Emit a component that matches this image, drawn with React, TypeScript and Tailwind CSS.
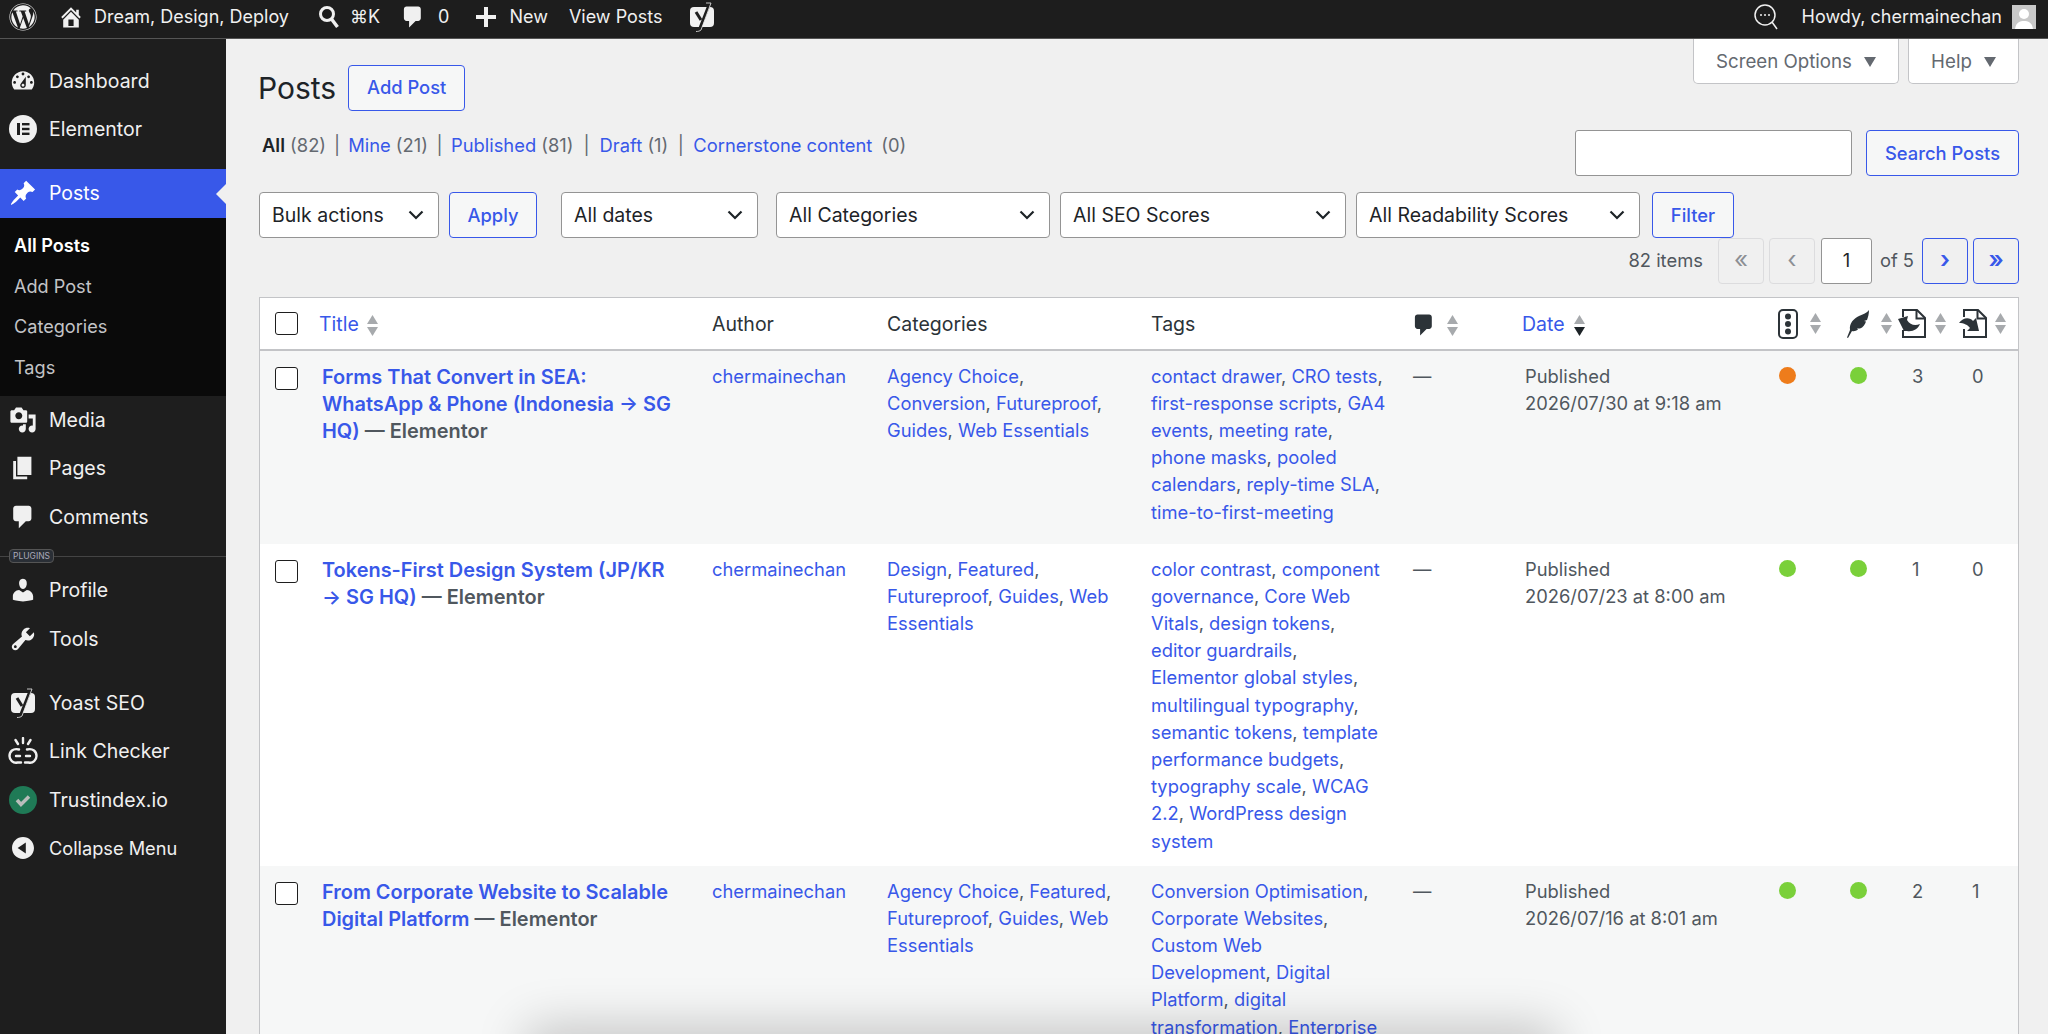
import React from "react";
import { FaWordpress } from "react-icons/fa";

const P = {
  home: "M16 8.5l1.53 1.53-1.06 1.06L10 4.62l-6.47 6.47-1.06-1.06L10 2.5l4 4v-2h2v4zm-6-2.46l6 5.99V18H4v-5.97zM12 17v-5H8v5h4z",
  comment: "M5 2h9c1.1 0 2 .9 2 2v7c0 1.1-.9 2-2 2h-2l-5 5v-5H5c-1.1 0-2-.9-2-2V4c0-1.1.9-2 2-2z",
  pin: "M10.44 3.02l1.82-1.82 6.36 6.35-1.83 1.82c-1.05-.68-2.48-.57-3.41.36l-.75.75c-.92.93-1.04 2.35-.35 3.41l-1.83 1.82-2.41-2.41-2.8 2.79c-.42.42-3.38 2.71-3.8 2.29s1.86-3.39 2.28-3.81l2.79-2.79L4.1 9.36l1.83-1.82c1.05.69 2.48.57 3.4-.36l.75-.75c.93-.92 1.05-2.35.36-3.41z",
  dash: "M3.76 16h12.48c1.1-1.37 1.76-3.11 1.76-5 0-4.42-3.58-8-8-8s-8 3.58-8 8c0 1.89.66 3.63 1.76 5zM10 4c.55 0 1 .45 1 1s-.45 1-1 1-1-.45-1-1 .45-1 1-1zM6 6c.55 0 1 .45 1 1s-.45 1-1 1-1-.45-1-1 .45-1 1-1zm8 0c.55 0 1 .45 1 1s-.45 1-1 1-1-.45-1-1 .45-1 1-1zm-5.37 5.55L12 7v6c0 1.1-.9 2-2 2s-2-.9-2-2c0-.57.24-1.08.63-1.45zM4 10c.55 0 1 .45 1 1s-.45 1-1 1-1-.45-1-1 .45-1 1-1zm12 0c.55 0 1 .45 1 1s-.45 1-1 1-1-.45-1-1 .45-1 1-1zm-5 3c0-.55-.45-1-1-1s-1 .45-1 1 .45 1 1 1 1-.45 1-1z",
  media: "M13 11V4c0-.55-.45-1-1-1h-1.67L9 1H5L3.67 3H2c-.55 0-1 .45-1 1v7c0 .55.45 1 1 1h10c.55 0 1-.45 1-1zM7 4.5c1.38 0 2.5 1.12 2.5 2.5S8.38 9.5 7 9.5 4.5 8.38 4.5 7 5.62 4.5 7 4.5zM14 6h5v10.5c0 1.38-1.12 2.5-2.5 2.5S14 17.88 14 16.5s1.12-2.5 2.5-2.5c.17 0 .34.02.5.05V9h-3V6zm-4 8.05V13h2v3.5c0 1.38-1.12 2.5-2.5 2.5S7 17.88 7 16.5 8.12 14 9.5 14c.17 0 .34.02.5.05z",
  page: "M6 15V2h10v13H6zm-1 1h8v2H3V5h2v11z",
  user: "M10 9.25c-2.27 0-2.73-3.44-2.73-3.44C7 4.02 7.82 2 9.97 2c2.16 0 2.98 2.02 2.71 3.81 0 0-.41 3.44-2.68 3.44zm0 2.57L12.72 10c2.39 0 4.52 2.33 4.52 4.53v2.49s-3.65 1.13-7.24 1.13c-3.65 0-7.24-1.13-7.24-1.13v-2.49c0-2.25 1.94-4.48 4.47-4.48z",
  tools: "M16.68 9.77c-1.34 1.34-3.3 1.67-4.95.99l-5.41 6.52c-.99.99-2.59.99-3.58 0s-.99-2.59 0-3.57l6.52-5.42c-.68-1.65-.35-3.61.99-4.95 1.28-1.28 3.12-1.62 4.72-1.06l-2.89 2.89 2.82 2.82 2.86-2.87c.53 1.58.18 3.39-1.08 4.65zM3.81 16.21c.4.39 1.04.39 1.43 0 .4-.4.4-1.04 0-1.43-.39-.4-1.03-.4-1.43 0-.39.39-.39 1.03 0 1.43z",
  collapse: "M10 2.16c4.33 0 7.84 3.51 7.84 7.84s-3.51 7.84-7.84 7.84S2.16 14.33 2.16 10 5.71 2.16 10 2.16zm2 11.72V6.12L6.18 9.97z",
};

function Dash({ d, size = 28, className = "" }: { d: string; size?: number; className?: string }) {
  return (
    <svg viewBox="0 0 20 20" width={size} height={size} fill="currentColor" className={className}>
      <path d={d} />
    </svg>
  );
}

function Elementor() {
  return (
    <svg viewBox="0 0 28 28" width={28} height={28}>
      <circle cx="14" cy="14" r="14" fill="#f0f0f0" />
      <rect x="8" y="8" width="3" height="12" fill="#1e1e1e" />
      <rect x="13" y="8" width="7.500" height="2.400" fill="#1e1e1e" />
      <rect x="13" y="12.800" width="7.500" height="2.400" fill="#1e1e1e" />
      <rect x="13" y="17.600" width="7.500" height="2.400" fill="#1e1e1e" />
    </svg>
  );
}

function Yoast({ bg = "#1e1e1e" }: { bg?: string }) {
  return (
    <svg viewBox="0 0 26 30" width={26} height={30}>
      <rect x="1" y="5" width="24" height="20" rx="4" fill="#f0f0f0" />
      <path d="M7 10l5 8" fill="none" stroke={bg} strokeWidth="3" />
      <path d="M20 3L11 26c-1 1.500-3 2-5 2" fill="none" stroke={bg} strokeWidth="3" />
      <path d="M17 1h5L12 28c-1 1-3 1.500-5 1.500" fill="none" stroke="#f0f0f0" strokeWidth="0.800" />
    </svg>
  );
}

function LinkChecker() {
  return (
    <svg viewBox="0 0 30 28" width={30} height={28} fill="none" stroke="#f0f0f0" strokeWidth="2.400" strokeLinecap="round">
      <path d="M15 1v5M7.500 3l2.500 4M22.500 3L20 7" />
      <path d="M11 12.500C5 11 1.500 14.500 1.500 19c0 4 3.500 7.500 8 6.500H13" />
      <path d="M19 12.500c6-1.500 9.500 2 9.500 6.500 0 4-3.500 7.500-8 6.500H17" />
      <path d="M8 19h4M18 19h4" />
    </svg>
  );
}

function Trust() {
  return (
    <svg viewBox="0 0 28 28" width={28} height={28}>
      <circle cx="14" cy="14" r="14" fill="#1f7a56" />
      <path d="M8 14l4 4.500 8-8" fill="none" stroke="#b9bdbb" strokeWidth="3.500" />
    </svg>
  );
}

function ChatSearch() {
  return (
    <svg viewBox="0 0 24 26" width={24} height={26} fill="none" stroke="#f0f0f0" strokeWidth="1.500">
      <circle cx="11" cy="11" r="10" />
      <path d="M18 18l5 7" />
      <circle cx="7" cy="11" r="1" fill="#f0f0f0" stroke="none" />
      <circle cx="11" cy="11" r="1" fill="#f0f0f0" stroke="none" />
      <circle cx="15" cy="11" r="1" fill="#f0f0f0" stroke="none" />
    </svg>
  );
}

function Sort({ active = false }: { active?: boolean }) {
  return (
    <span className="inline-flex flex-col gap-[3px] w-[11px] shrink-0">
      <svg viewBox="0 0 11 9" width={11} height={9}><path d="M5.500 0L11 9H0z" fill="#a7aaad" /></svg>
      <svg viewBox="0 0 11 9" width={11} height={9}><path d="M5.500 9L11 0H0z" fill={active ? "#1d2327" : "#a7aaad"} /></svg>
    </span>
  );
}

function Traffic() {
  return (
    <svg viewBox="0 0 20 30" width={20} height={30}>
      <rect x="1" y="1" width="18" height="28" rx="4" fill="none" stroke="#2c3338" strokeWidth="2" />
      <circle cx="10" cy="7.500" r="3" fill="#2c3338" />
      <circle cx="10" cy="15" r="3" fill="#2c3338" />
      <circle cx="10" cy="22.500" r="3" fill="#2c3338" />
    </svg>
  );
}

function Feather() {
  return (
    <svg viewBox="0 0 22 28" width={22} height={28}>
      <path d="M22 0c0 4-1 7-2 10l-3 1 2 .500c-1 3-3 6-6 7l-3 0 1 1c-2 1.500-4 2-6 1.500L1 28 0 27.500l3-7.500C2 13 7 8.500 12 6c4-2 8-3 10-6z" fill="#2c3338" />
    </svg>
  );
}

function DocIcon({ out = false }: { out?: boolean }) {
  return (
    <svg viewBox="0 0 28 29" width={28} height={29}>
      <path d={out ? "M5 8V1h14l8 8v19H5v-8" : "M5 8V1h14l8 8v19H5v-7"} fill="none" stroke="#2c3338" strokeWidth="2" />
      <path d="M18.500 1v8.500H27" fill="none" stroke="#2c3338" strokeWidth="2" />
      {out ? (
        <path d="M0 14c4-6 11-6 14-2l3-3 3 13H8l3-3c-2-3-6-5-11-5z" fill="#2c3338" />
      ) : (
        <path d="M0 10l10-3-1 4c3 5 8 6 13 4-2 5-7 8-13 7l-3 0z" fill="#2c3338" />
      )}
    </svg>
  );
}

function Caret() {
  return <svg viewBox="0 0 12 10" width={12} height={10}><path d="M6 10L12 0H0z" fill="#646970" /></svg>;
}

function Chevron() {
  return (
    <svg viewBox="0 0 16 10" width={16} height={10} fill="none" stroke="#1d2327" strokeWidth="2.200">
      <path d="M1.500 1.500L8 8l6.500-6.500" />
    </svg>
  );
}

function Btn({ children, className = "" }: { children: React.ReactNode; className?: string }) {
  return (
    <button className={`h-[46px] pt-[1px] border-[1.500px] border-[#3858e9] rounded-[4px] text-[#3858e9] font-medium flex items-center justify-center bg-[#f6f7f7] ${className}`}>
      {children}
    </button>
  );
}

function Select({ label, className = "" }: { label: string; className?: string }) {
  return (
    <div className={`h-[46px] bg-white border-[1.500px] border-[#949494] rounded-[4px] pl-[12px] pr-[14px] flex items-center justify-between text-[19.500px] text-[#1d2327] ${className}`}>
      <span className="pt-[1px]">{label}</span>
      <Chevron />
    </div>
  );
}

function MenuItem({ icon, label, active = false, small = false }: { icon: React.ReactNode; label: string; active?: boolean; small?: boolean }) {
  return (
    <div className={`relative h-[48.500px] flex items-center text-[#f0f0f0] ${small ? "text-[18.200px]" : "text-[19.500px]"} ${active ? "bg-[#3858e9] text-white" : ""}`}>
      <span className="w-[49px] flex justify-center pr-[3px] shrink-0">{icon}</span>
      <span className="pt-[1px]">{label}</span>
      {active && (
        <span className="absolute right-0 top-[15px] w-0 h-0 border-y-[10px] border-y-transparent border-r-[10px] border-r-[#f0f0f0]" />
      )}
    </div>
  );
}

function Sidebar() {
  const sub = ["All Posts", "Add Post", "Categories", "Tags"];
  return (
    <aside className="w-[226px] shrink-0 bg-[#1e1e1e] pt-[17.500px]">
      <MenuItem icon={<Dash d={P.dash} size={28} />} label="Dashboard" />
      <MenuItem icon={<Elementor />} label="Elementor" />
      <div className="h-[15.500px]" />
      <MenuItem icon={<Dash d={P.pin} size={28} />} label="Posts" active />
      <div className="bg-[#0a0a0a] h-[178px] flex flex-col justify-center text-[18.130px]">
        {sub.map((s, i) => (
          <div key={s} className={`h-[40.500px] flex items-center pl-[14px] ${i === 0 ? "text-white font-semibold" : "text-[#c3c4c7]"}`}>{s}</div>
        ))}
      </div>
      <MenuItem icon={<Dash d={P.media} size={28} />} label="Media" />
      <MenuItem icon={<Dash d={P.page} size={28} />} label="Pages" />
      <MenuItem icon={<Dash d={P.comment} size={28} />} label="Comments" />
      <div className="relative h-[25px]">
        <div className="absolute left-0 right-0 top-[15px] h-px bg-[#444]" />
        <span className="absolute left-[9px] top-[8px] h-[14px] px-[3px] rounded-[4px] border border-[#555] bg-[#2a2f36] text-[8.500px] leading-[12px] text-[#aab]">PLUGINS</span>
      </div>
      <MenuItem icon={<Dash d={P.user} size={28} />} label="Profile" />
      <MenuItem icon={<Dash d={P.tools} size={28} />} label="Tools" />
      <div className="h-[15.500px]" />
      <MenuItem icon={<Yoast />} label="Yoast SEO" />
      <MenuItem icon={<LinkChecker />} label="Link Checker" />
      <MenuItem icon={<Trust />} label="Trustindex.io" />
      <MenuItem icon={<Dash d={P.collapse} size={28} />} label="Collapse Menu" small />
    </aside>
  );
}

function AdminBar() {
  return (
    <header className="h-[39px] shrink-0 bg-[#1d1d1d] border-b border-[#555] flex items-center text-[#f0f0f0] text-[18px] pl-[9px] pr-[12px] pb-[5px]">
      <FaWordpress size={28} />
      <Dash d={P.home} size={26} className="ml-[21px]" />
      <span className="ml-[10px]">Dream, Design, Deploy</span>
      <svg viewBox="0 0 22 24" width={22} height={24} className="ml-[29px]" fill="none" stroke="#f0f0f0">
        <circle cx="9" cy="9" r="6.500" strokeWidth="3" />
        <path d="M13.500 14l6 8" strokeWidth="3.500" />
      </svg>
      <span className="ml-[10px]">⌘K</span>
      <Dash d={P.comment} size={26} className="ml-[20px]" />
      <span className="ml-[12px]">0</span>
      <svg viewBox="0 0 20 20" width={20} height={20} fill="#f0f0f0" className="ml-[27px]"><path d="M8 0h4v8h8v4h-8v8H8v-8H0V8h8z" /></svg>
      <span className="ml-[13px]">New</span>
      <span className="ml-[21px]">View Posts</span>
      <span className="ml-[26px]"><Yoast bg="#1d1d1d" /></span>
      <span className="ml-auto"><ChatSearch /></span>
      <span className="ml-[24px]">Howdy, chermainechan</span>
      <span className="ml-[10px] w-[24px] h-[24px] bg-[#c8c8c8] flex items-end justify-center overflow-hidden">
        <svg viewBox="0 0 24 24" width={24} height={24}><circle cx="12" cy="9" r="5" fill="#fff" /><path d="M3 24c1-7 5-8 9-8s8 1 9 8z" fill="#fff" /></svg>
      </span>
    </header>
  );
}

const L = "text-[#3858e9]";

function Lines({ lines }: { lines: string[] }) {
  return (
    <>
      {lines.map((line) => (
        <div key={line} className="whitespace-nowrap">
          {line.split(/(, )|(,$)/).filter(Boolean).map((part, i) =>
            part.startsWith(",") ? <span key={i}>{part}</span> : <a key={i} className={L}>{part}</a>
          )}
        </div>
      ))}
    </>
  );
}

function Dot({ c }: { c: string }) {
  return <span className={`block w-[17px] h-[17px] rounded-full mt-[4px] ${c}`} />;
}

const rows = [
  {
    title: "Forms That Convert in SEA: WhatsApp & Phone (Indonesia → SG HQ)",
    cats: ["Agency Choice,", "Conversion, Futureproof,", "Guides, Web Essentials"],
    tags: ["contact drawer, CRO tests,", "first-response scripts, GA4", "events, meeting rate,", "phone masks, pooled", "calendars, reply-time SLA,", "time-to-first-meeting"],
    date: "2026/07/30 at 9:18 am", seo: "bg-[#ee7c1b]", a: "3", b: "0", bg: "bg-[#f6f7f7]", h: "h-[194px]",
  },
  {
    title: "Tokens-First Design System (JP/KR → SG HQ)",
    cats: ["Design, Featured,", "Futureproof, Guides, Web", "Essentials"],
    tags: ["color contrast, component", "governance, Core Web", "Vitals, design tokens,", "editor guardrails,", "Elementor global styles,", "multilingual typography,", "semantic tokens, template", "performance budgets,", "typography scale, WCAG", "2.2, WordPress design", "system"],
    date: "2026/07/23 at 8:00 am", seo: "bg-[#7ad03a]", a: "1", b: "0", bg: "bg-white", h: "h-[322px]",
  },
  {
    title: "From Corporate Website to Scalable Digital Platform",
    cats: ["Agency Choice, Featured,", "Futureproof, Guides, Web", "Essentials"],
    tags: ["Conversion Optimisation,", "Corporate Websites,", "Custom Web", "Development, Digital", "Platform, digital", "transformation, Enterprise"],
    date: "2026/07/16 at 8:01 am", seo: "bg-[#7ad03a]", a: "2", b: "1", bg: "bg-[#f6f7f7]", h: "h-[200px]",
  },
];

function Check() {
  return <span className="block w-[23px] h-[23px] bg-white border-[1.500px] border-[#1e1e1e] rounded-[3px]" />;
}

function PostsTable() {
  const th = "h-[52px] px-[11px] pt-[3px] font-normal text-left align-middle";
  const td = "px-[11px] pt-[11.500px] align-top";
  return (
    <div className="border border-[#c3c4c7] bg-white">
      <table className="w-full table-fixed border-collapse text-[#50575e]">
        <colgroup>
          <col className="w-[51px]" />
          <col className="w-[390px]" />
          <col className="w-[175px]" />
          <col className="w-[264px]" />
          <col className="w-[263px]" />
          <col className="w-[111px]" />
          <col className="w-[254px]" />
          <col className="w-[73px]" />
          <col className="w-[52px]" />
          <col className="w-[57px]" />
          <col className="w-[68px]" />
        </colgroup>
        <thead>
          <tr className="border-b-2 border-[#c3c4c7] text-[#2c3338] text-[19.500px]">
            <th className="pl-[15px] align-middle"><Check /></th>
            <th className={`${th} !pl-[8px]`}><span className="flex items-center gap-[8px]"><span className={L}>Title</span><Sort /></span></th>
            <th className={th}>Author</th>
            <th className={th}>Categories</th>
            <th className={th}>Tags</th>
            <th className={th}><span className="flex items-center gap-[10px]"><Dash d={P.comment} size={26} className="-ml-[3px] text-[#2c3338]" /><Sort /></span></th>
            <th className={`${th} !pl-[8px]`}><span className="flex items-center gap-[9px]"><span className={L}>Date</span><Sort active /></span></th>
            <th className={`${th} !pl-[10px] !pt-0`}><span className="flex items-center gap-[12px]"><Traffic /><Sort /></span></th>
            <th className={`${th} !pl-[6px] !pr-0 !pt-0`}><span className="flex items-center gap-[12px]"><Feather /><Sort /></span></th>
            <th className={`${th} !pl-[5px] !pr-0 !pt-0`}><span className="flex items-center gap-[9px]"><DocIcon /><Sort /></span></th>
            <th className={`${th} !pl-[9px] !pr-0 !pt-0`}><span className="flex items-center gap-[8px]"><DocIcon out /><Sort /></span></th>
          </tr>
        </thead>
        <tbody>
          {rows.map((r) => (
            <tr key={r.title} className={`${r.bg} ${r.h} leading-[27.200px]`}>
              <td className="pl-[15px] pt-[16px] align-top"><Check /></td>
              <td className={`${td} !pl-[11px] !pr-[24px] !pt-[13px] font-semibold text-[19.950px]`}><a className={L}>{r.title}</a> — Elementor</td>
              <td className={td}><a className={L}>chermainechan</a></td>
              <td className={td}><Lines lines={r.cats} /></td>
              <td className={td}><Lines lines={r.tags} /></td>
              <td className={td}><span className="-ml-[1px]">—</span></td>
              <td className={`${td} !pl-[11px]`}>Published<br />{r.date}</td>
              <td className={td}><Dot c={r.seo} /></td>
              <td className={`${td} !pl-[9px]`}><Dot c="bg-[#7ad03a]" /></td>
              <td className={`${td} !pl-[19px] !pr-0`}>{r.a}</td>
              <td className={`${td} !pl-[22px] !pr-0`}>{r.b}</td>
            </tr>
          ))}
        </tbody>
      </table>
    </div>
  );
}

function PageBtn({ children, on }: { children: React.ReactNode; on: boolean }) {
  return (
    <span className={`w-[46px] h-[46px] rounded-[4px] flex items-center justify-center text-[24px] pb-[3px] ${on ? "border-[1.500px] border-[#3858e9] text-[#3858e9] font-semibold" : "border border-[#dcdcde] text-[#8c8f94] bg-[#f0f0f0]"}`}>
      {children}
    </span>
  );
}

function Main() {
  return (
    <main className="relative flex-1 min-w-0 pl-[33px] pr-[29px]">
      <div className="flex justify-between h-[71px]">
        <div className="flex items-center gap-[12px] pt-[26px]">
          <h1 className="text-[30px] leading-[46px] mt-[1px] -ml-[1px] text-[#1d2327] font-normal">Posts</h1>
          <Btn className="w-[117px]">Add Post</Btn>
        </div>
        <div className="flex gap-[9px] items-start text-[18.700px]">
          <div className="h-[44.500px] pt-[3px] w-[206px] bg-white border border-t-0 border-[#c3c4c7] rounded-b-[5px] flex items-center justify-center gap-[12px] text-[#646970]">Screen Options <Caret /></div>
          <div className="h-[44.500px] pt-[3px] w-[111px] bg-white border border-t-0 border-[#c3c4c7] rounded-b-[5px] flex items-center justify-center gap-[12px] text-[#646970]">Help <Caret /></div>
        </div>
      </div>
      <div className="flex justify-between items-start h-[66px]">
        <div className="flex items-center h-[36px] mt-[18px] pl-[3px] text-[#646970] whitespace-pre">
          <span className="text-[#1d2327] font-semibold">All</span><span> (82)</span><span className="mx-[8px]">|</span>
          <a className={L}>Mine</a><span> (21)</span><span className="mx-[8.500px]">|</span>
          <a className={L}>Published</a><span> (81)</span><span className="mx-[10px]">|</span>
          <a className={L}>Draft</a><span> (1)</span><span className="mx-[9.500px]">|</span>
          <a className={L}>Cornerstone content</a><span className="ml-[9px]">(0)</span>
        </div>
        <div className="flex gap-[14px] pt-[20px]">
          <div className="w-[277px] h-[46px] bg-white border-[1.500px] border-[#949494] rounded-[3px]" />
          <Btn className="w-[153px]">Search Posts</Btn>
        </div>
      </div>
      <div className="flex items-center mt-[16px] h-[46px]">
        <Select label="Bulk actions" className="w-[180px]" />
        <Btn className="w-[88px] ml-[10px]">Apply</Btn>
        <Select label="All dates" className="w-[197px] ml-[24px]" />
        <Select label="All Categories" className="w-[274px] ml-[18px]" />
        <Select label="All SEO Scores" className="w-[286px] ml-[10px]" />
        <Select label="All Readability Scores" className="w-[284px] ml-[10px]" />
        <Btn className="w-[82px] ml-[12px]">Filter</Btn>
      </div>
      <div className="flex items-center justify-end h-[46px] text-[#50575e]">
        <span className="mr-[15px]">82 items</span>
        <PageBtn on={false}>«</PageBtn>
        <span className="w-[5px]" />
        <PageBtn on={false}>‹</PageBtn>
        <span className="ml-[6px] w-[51px] h-[46px] bg-white border-[1.500px] border-[#949494] rounded-[3px] flex items-center justify-center text-[#1d2327]">1</span>
        <span className="mx-[8px]">of 5</span>
        <PageBtn on>›</PageBtn>
        <span className="w-[5px]" />
        <PageBtn on>»</PageBtn>
      </div>
      <div className="mt-[13px]"><PostsTable /></div>
      <div className="absolute left-[307px] w-[1017px] top-[995px] h-[40px] shadow-[0_0_50px_6px_rgba(0,0,0,0.22)] pointer-events-none" />
    </main>
  );
}

export default function App() {
  return (
    <div className="w-[2048px] h-[1034px] overflow-hidden flex flex-col bg-[#f0f0f0] text-[18.350px] font-[family-name:Inter,sans-serif]">
      <AdminBar />
      <div className="flex flex-1 min-h-0">
        <Sidebar />
        <Main />
      </div>
    </div>
  );
}
